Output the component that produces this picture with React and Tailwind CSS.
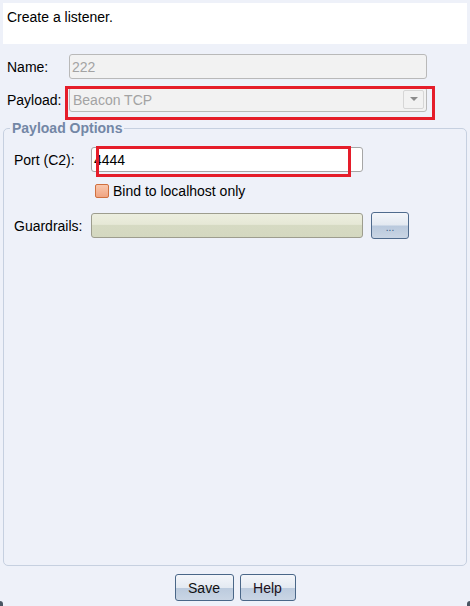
export default function App() {
  return (
    <div className="relative flex h-[606px] w-[470px] flex-col overflow-hidden bg-[#eef1f9] font-['Liberation_Sans',Arial,sans-serif] text-[14px] leading-[16px] text-black">
      <div className="mx-[3px] mt-[3px] h-[41px] bg-white pl-[4px] pt-[6px]">Create a listener.</div>

      <div className="mt-[10px] flex h-[25px] items-center">
        <span className="w-[69px] pl-[7px]">Name:</span>
        <div className="flex h-[25px] w-[358px] items-center rounded-[3px] border border-[#b9b9b9] bg-[#f2f2f2] pl-[2px] text-[#a3a3a3]">222</div>
      </div>

      <div className="mt-[8px] flex h-[25px] items-center">
        <span className="w-[69px] pl-[7px]">Payload:</span>
        <div className="relative flex h-[25px] w-[358px] items-center rounded-[3px] border border-[#b9b9b9] bg-[#f2f2f2] pl-[3px] text-[#a3a3a3]">
          Beacon TCP
          <div className="absolute right-[2px] top-[2px] flex h-[19px] w-[21px] items-center justify-center rounded-[2px] border border-[#d6d6d6] bg-[#f2f2f2]">
            <svg width="8" height="5" viewBox="0 0 8 5"><path d="M0 0 H8 L4 4 Z" fill="#8c8c8c" /></svg>
          </div>
          <div className="absolute left-[-5px] top-[-2px] h-[34px] w-[370px] border-[3px] border-[#e51d2a]" />
        </div>
      </div>

      <fieldset className="mx-[3px] mt-[8px] flex-1 rounded-[5px] border border-[#c6d0e0]">
        <legend className="ml-[6px] px-[2px] text-[14px] font-bold leading-[16px] text-[#7387a6]">Payload Options</legend>

        <div className="mt-[11px] flex h-[25px] items-center pl-[10px]">
          <span className="w-[77px]">Port (C2):</span>
          <div className="relative flex h-[25px] w-[272px] items-center rounded-[3px] border border-[#a6a6a6] bg-white pl-[2px]">
            4444
            <div className="absolute left-[4px] top-[-2px] h-[31px] w-[255px] border-[3px] border-[#e51d2a]" />
          </div>
        </div>

        <div className="mt-[12px] flex h-[14px] items-center pl-[91px]">
          <span className="h-[14px] w-[14px] rounded-[2px] border border-[#d0703f] bg-[linear-gradient(to_bottom,#f9c7ad,#f0a482)]" />
          <span className="ml-[4px]">Bind to localhost only</span>
        </div>

        <div className="mt-[14px] flex h-[27px] items-center pl-[10px]">
          <span className="w-[77px]">Guardrails:</span>
          <div className="h-[25px] w-[272px] rounded-[3px] border border-[#9d9d8e] bg-[linear-gradient(to_bottom,#eceedf_0%,#e6e8d6_45%,#d6dac3_50%,#d4d8c0_100%)]" />
          <div className="ml-[8px] flex h-[27px] w-[38px] items-end justify-center rounded-[3px] border border-[#4f6b8d] bg-[linear-gradient(to_bottom,#f3f6fa_0%,#e3e9f1_48%,#b9c9dd_52%,#c9d5e4_100%)] pb-[6px] text-[10px] leading-[8px] text-[#3a5a86]">
            ...
          </div>
        </div>
      </fieldset>

      <div className="mb-[5px] mt-[8px] flex h-[27px] justify-center gap-[6px]">
        <button className="flex h-[27px] w-[59px] items-center justify-center rounded-[3px] border border-[#4a6788] bg-[linear-gradient(to_bottom,#f4f6fa_0%,#e4eaf2_50%,#bccbde_54%,#c9d5e4_100%)] text-[#111]">Save</button>
        <button className="flex h-[27px] w-[56px] items-center justify-center rounded-[3px] border border-[#4a6788] bg-[linear-gradient(to_bottom,#f4f6fa_0%,#e4eaf2_50%,#bccbde_54%,#c9d5e4_100%)] text-[#20101a]">Help</button>
      </div>

      <div className="absolute bottom-0 left-0 h-[5px] w-[3px] rounded-tr-[4px] bg-[#4a5663]" />
      <div className="absolute bottom-0 right-0 h-[5px] w-[3px] rounded-tl-[4px] bg-[#4a5663]" />
    </div>
  );
}
